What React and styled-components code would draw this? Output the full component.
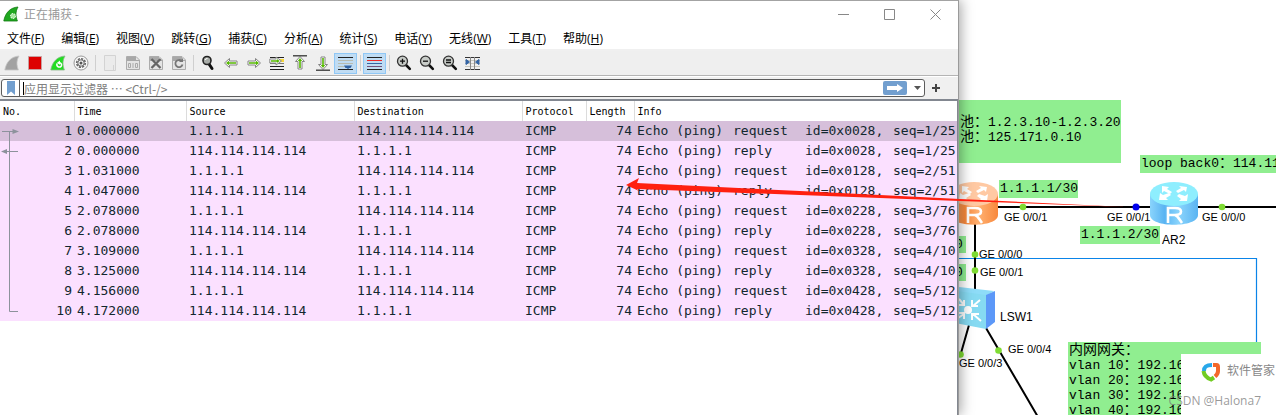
import styled, { createGlobalStyle } from 'styled-components'

const GlobalStyle=createGlobalStyle`
    *{
        box-sizing:border-box;
    }
    body{
        margin:0px;
        background:#ffffff;
        overflow:hidden;
        font-family:"Open Sans","Noto Sans CJK SC",sans-serif;
        font-size:12px;
        color:#000000;
    }
    button{
        border:none;
        background:none;
        padding:0px;
        font:inherit;
    }
`;

const Desktop=styled.div`
    display:grid;
    grid-template-columns:minmax(0,1fr) 317px;
    min-height:100vh;
`;

const CaptureWindow=styled.main`
    position:relative;
    z-index:1;
    display:flex;
    flex-direction:column;
    background:#ffffff;
    border-top:1px solid #a3a3a3;
    border-right:1px solid #9a9a9a;
    box-shadow:2px 0px 12px rgba(0,0,0,0.35);
`;

const TitleBar=styled.header`
    display:flex;
    align-items:center;
    height:26px;
    padding-left:3px;
    color:#999999;
    h1{
        flex:1;
        margin:0px 0px 0px 5px;
        font-size:12px;
        font-weight:400;
    }
`;

const WindowButton=styled.button`
    width:46px;
    height:26px;
    display:flex;
    align-items:center;
    justify-content:center;
`;

const MenuBar=styled.nav`
    display:flex;
    align-items:center;
    gap:17px;
    height:24px;
    padding:2px 0px 0px 7px;
    border-bottom:2px solid #f0f0f0;
    button{
        white-space:nowrap;
        line-height:20px;
    }
`;

const ToolBar=styled.div`
    display:flex;
    align-items:center;
    height:25px;
    background:#efefef;
    border-bottom:1px solid #b4b4b4;
`;

const ToolButton=styled.button`
    width:23px;
    height:21px;
    display:flex;
    align-items:center;
    justify-content:center;
    flex-shrink:0;
    background:${props=>props.$on ? '#c0dcf3' : 'none'};
    border:${props=>props.$on ? '1px solid #90c8f6' : 'none'};
    opacity:${props=>props.$dim ? 0.55 : 1};
`;

const Separator=styled.span`
    width:6px;
    height:16px;
    flex-shrink:0;
    background:linear-gradient(#cfcfcf,#cfcfcf) center/1px 100% no-repeat;
`;

const FilterBar=styled.form`
    display:flex;
    align-items:center;
    height:23px;
    padding-left:1px;
    padding-right:18px;
    background:#f0f0f0;
    border-top:1px solid #ffffff;
`;

const FilterBox=styled.div`
    flex:1;
    display:flex;
    align-items:center;
    height:18px;
    padding-right:3px;
    background:#ffffff;
    border:1px solid #5c5c5c;
    border-radius:3px;
    input{
        flex:1;
        min-width:0;
        height:16px;
        padding:0px;
        border:none;
        outline:none;
        background:none;
        font-family:"Noto Sans CJK SC",sans-serif;
        font-size:12px;
    }
    input::placeholder{
        color:#808080;
    }
`;

const Bookmark=styled.button`
    width:18px;
    height:16px;
    display:flex;
    align-items:center;
    justify-content:center;
    border-right:1px solid #5c5c5c;
    margin-right:3px;
`;

const Caret=styled.span`
    width:1px;
    height:13px;
    background:#000000;
`;

const ApplyButton=styled.button`
    width:24px;
    height:14px;
    display:flex;
    align-items:center;
    justify-content:center;
    background:#729fcf;
    border-radius:2px;
`;

const DropButton=styled.button`
    width:14px;
    height:16px;
    display:flex;
    align-items:center;
    justify-content:flex-end;
`;

const AddButton=styled.button`
    width:15px;
    height:18px;
    display:flex;
    align-items:center;
    justify-content:flex-end;
`;

const ListFrame=styled.div`
    flex:1;
    overflow:hidden;
    border-top:2px solid #828790;
    border-right:1px solid #828790;
`;

const PacketTable=styled.table`
    width:100%;
    table-layout:fixed;
    border-collapse:collapse;
    th,td{
        height:20px;
        padding:0px 2px 0px 3px;
        overflow:hidden;
        white-space:nowrap;
        text-align:left;
    }
    th{
        font-family:"DejaVu Sans Mono",monospace;
        font-size:10px;
        font-weight:400;
        border-right:1px solid #dcdcdc;
    }
    th:last-child{
        border-right:none;
    }
`;

const PacketRow=styled.tr`
    background:${props=>props.$selected ? '#d6bfda' : '#fbe0ff'};
    color:#12272e;
    font-family:"DejaVu Sans Mono",monospace;
    font-size:13px;
    line-height:20px;
    td:first-child{
        padding-left:0px;
    }
    td:nth-child(6){
        text-align:right;
    }
`;

const Number=styled.div`
    display:flex;
    justify-content:space-between;
    height:20px;
`;

const Info=styled.div`
    display:grid;
    grid-template-columns:96px 72px 88px 1fr;
`;

const Topology=styled.section`
    position:relative;
    overflow:hidden;
    background:#ffffff;
`;

const Drawing=styled.svg`
    position:absolute;
    left:0px;
    top:0px;
`;

const Note=styled.div`
    position:absolute;
    left:${props=>props.$x}px;
    top:${props=>props.$y}px;
    width:${props=>props.$w}px;
    height:${props=>props.$h}px;
    padding:${props=>props.$pad || 0}px 0px 0px 1px;
    overflow:hidden;
    background:#90ee90;
    font-family:"Liberation Mono",monospace;
    font-size:13px;
    line-height:17px;
    white-space:nowrap;
    p{
        margin:0px;
        line-height:15px;
    }
`;

const Han=styled.span`
    font-family:"Noto Sans CJK SC",sans-serif;
    font-size:14px;
    line-height:0;
`;

const Label=styled.span`
    position:absolute;
    left:${props=>props.$x}px;
    top:${props=>props.$y}px;
    font-family:"Liberation Sans",sans-serif;
    font-size:${props=>props.$big ? 12 : 11}px;
    line-height:14px;
    white-space:nowrap;
`;

const Popup=styled.aside`
    position:absolute;
    right:0px;
    top:354px;
    width:95px;
    height:61px;
    display:flex;
    gap:6px;
    padding:8px 0px 0px 20px;
    background:#ffffff;
    color:#888888;
    line-height:18px;
    white-space:nowrap;
`;

const Watermark=styled.span`
    position:absolute;
    right:15px;
    top:393px;
    font-family:"Open Sans",sans-serif;
    font-size:12px;
    line-height:16px;
    color:rgba(120,120,120,0.75);
`;

const RedArrow=styled.svg`
    position:absolute;
    z-index:2;
    right:140px;
    top:170px;
    pointer-events:none;
`;

const menus=[
    ['文件','F'],['编辑','E'],['视图','V'],['跳转','G'],['捕获','C'],['分析','A'],
    ['统计','S'],['电话','Y'],['无线','W'],['工具','T'],['帮助','H'],
]

const A='1.1.1.1'
const B='114.114.114.114'
const packets=[
    ['0.000000','request','0x0028','1/25'],
    ['0.000000','reply','0x0028','1/25'],
    ['1.031000','request','0x0128','2/51'],
    ['1.047000','reply','0x0128','2/51'],
    ['2.078000','request','0x0228','3/76'],
    ['2.078000','reply','0x0228','3/76'],
    ['3.109000','request','0x0328','4/10'],
    ['3.125000','reply','0x0328','4/10'],
    ['4.156000','request','0x0428','5/12'],
    ['4.172000','reply','0x0428','5/12'],
]

const Arrow=({turn=0,bar})=>(
    <svg width='16' height='16' viewBox='0 0 16 16'>
        <path transform={`rotate(${turn} 8 8)`} d='M1.5 8L6.5 3.5V6H14V10H6.5V12.5Z' fill='#ffffff' stroke='#858585' strokeWidth='1'/>
        <path transform={`rotate(${turn} 8 8)`} d='M3 8L6 5.8V7.2H13V8.8H6V10.2Z' fill='#55b800'/>
        {bar==='top' && <path d='M1 0.8H15' stroke='#333333' strokeWidth='1.3'/>}
        {bar==='bottom' && <path d='M1 15.2H15' stroke='#333333' strokeWidth='1.3'/>}
    </svg>
)

const Lens=({sign})=>(
    <svg width='16' height='16' viewBox='0 0 16 16'>
        <path d='M9.5 9.5L13.8 13.8' stroke='#111111' strokeWidth='2.6' strokeLinecap='round'/>
        <circle cx='6.5' cy='6.2' r='5' fill='#c8ccc8' stroke='#333333' strokeWidth='1.3'/>
        <path d={sign} stroke='#111111' strokeWidth='1.3'/>
    </svg>
)

const Page=({children})=>(
    <svg width='16' height='16' viewBox='0 0 16 16'>
        <path d='M1.5 1.5H11L14.5 5V14.5H1.5Z' fill='#e4e4e4' stroke='#acacac'/>
        <path d='M2 2H11V5H14V6H2Z' fill='#a8a8a8'/>
        {children}
    </svg>
)

const Fin=({fill,edge,children,size=16})=>(
    <svg width={size} height={size} viewBox='0 0 16 16'>
        <path d='M0.8 15C2.2 7 7 1.6 15 1C12.4 5.5 12.5 10 14.4 15Z' fill={fill} stroke={edge} strokeWidth='0.8'/>
        {children}
    </svg>
)

const tools=[
    {name:'开始捕获',icon:<Fin fill='#a2a2a2' edge='#c8c8c8'/>},
    {name:'停止捕获',icon:<svg width='14' height='14'><path d='M0.5 0.5H13.5V13.5H0.5Z' fill='#dd0000' stroke='#c8a0a0'/></svg>},
    {name:'重新开始捕获',icon:<Fin fill='#22dd22' edge='#8ab88a'>
        <path d='M7 8.5C6 12 10.5 13.5 11.5 10.5C12 8.5 10 7.5 9 8' fill='none' stroke='#ffffff' strokeWidth='1.5'/>
        <path d='M10 5.5V9.8L6.8 8Z' fill='#ffffff'/>
    </Fin>},
    {name:'捕获选项',icon:<svg width='16' height='16' viewBox='0 0 16 16'>
        <circle cx='8' cy='8' r='7' fill='#f8f8f8' stroke='#9a9a9a'/>
        <circle cx='8' cy='8' r='4.3' fill='none' stroke='#666666' strokeWidth='1.6' strokeDasharray='2.2 1.1'/>
        <circle cx='8' cy='8' r='3.2' fill='none' stroke='#666666'/>
        <circle cx='8' cy='8' r='1.5' fill='#555555'/>
    </svg>},
    null,
    {name:'打开',dim:true,icon:<svg width='14' height='16'><path d='M1.5 0.5H12.5V15.5H1.5ZM10.5 10V15' fill='#e9e9e9' stroke='#bdbdbd'/></svg>},
    {name:'保存',icon:<Page><path d='M3.5 8.5H5.5V12.5H3.5ZM8 8V13M10.5 8.5H12.5V12.5H10.5Z' fill='none' stroke='#aaaaaa'/></Page>},
    {name:'关闭文件',icon:<Page><path d='M3.5 4L12.5 13M12.5 4L3.5 13' stroke='#666666' strokeWidth='2.3'/></Page>},
    {name:'重新加载',icon:<Page><path d='M10.5 6A3.6 3.6 0 1 0 11.5 9.5' fill='none' stroke='#777777' strokeWidth='1.8'/><path d='M8 7H12V3Z' fill='#777777'/></Page>},
    null,
    {name:'查找',icon:<svg width='16' height='16' viewBox='0 0 16 16'>
        <path d='M9 9L12 13.5' stroke='#111111' strokeWidth='3' strokeLinecap='round'/>
        <circle cx='7' cy='5.5' r='4' fill='#a8aca8' stroke='#222222' strokeWidth='1.6'/>
        <path d='M5 5Q5.5 3.5 7.5 3.5' fill='none' stroke='#ffffff'/>
    </svg>},
    {name:'后退',icon:<Arrow/>},
    {name:'前进',icon:<Arrow turn={180}/>},
    {name:'转到分组',icon:<svg width='16' height='16' viewBox='0 0 16 16'>
        <path d='M1 2.5H15M1 11.5H15M1 14.5H15' stroke='#222222' strokeWidth='1.2'/>
        <path d='M10 5.5H15' stroke='#f8d838' strokeWidth='3'/>
        <path d='M1 8.5H15' stroke='#777777'/>
        <path d='M0.8 4H7V2L12.5 6L7 10V8H0.8Z' fill='#ffffff' stroke='#8a8a8a'/>
        <path d='M2 5.3H7.8V4L10.8 6L7.8 8V6.7H2Z' fill='#55b800'/>
    </svg>},
    {name:'首个分组',icon:<Arrow turn={90} bar='top'/>},
    {name:'最新分组',icon:<Arrow turn={270} bar='bottom'/>},
    {name:'自动滚动',on:true,icon:<svg width='15' height='15'>
        <path d='M0 1.5H15M0 13.5H15' stroke='#222222'/>
        <path d='M0 4.5H15M0 7.5H15M0 10.5H8' stroke='#b8bcb0'/>
        <path d='M6 9.5H14L12.5 12H11.5L10 13L8.5 12H7.5Z' fill='#3465a4'/>
    </svg>},
    null,
    {name:'着色',on:true,icon:<svg width='15' height='15'>
        <path d='M0 1.5H15M0 13.5H15' stroke='#222222'/>
        <path d='M0 4.5H15' stroke='#ef2929'/>
        <path d='M0 7.5H15' stroke='#3465a4'/>
        <path d='M0 10.5H15' stroke='#75507b'/>
    </svg>},
    null,
    {name:'放大',icon:<Lens sign='M4 6.2H9M6.5 3.7V8.7'/>},
    {name:'缩小',icon:<Lens sign='M4 6.2H9'/>},
    {name:'正常大小',icon:<Lens sign='M4 5H9M4 7.5H9'/>},
    {name:'调整列宽',icon:<svg width='15' height='15'>
        <path d='M0 1.5H15M0 13.5H15' stroke='#333333'/>
        <path d='M0 4.5H15M0 7.5H15M0 10.5H15' stroke='#c8c8c0'/>
        <path d='M5.5 1V14M9.5 1V14' stroke='#888888'/>
        <path d='M1 3.5L4.5 6L1 8.5ZM14 3.5L10.5 6L14 8.5Z' fill='#3465a4' stroke='#3465a4'/>
    </svg>},
]

/* line that joins the packets of one conversation */
function Related({index}){
    return(
        <svg width='20' height='20' fill='none' stroke='#8d929c'>
            {index===0 && <><path d='M2 10.5H13M9.5 10.5V20'/><path d='M12.5 8L19 10.5L12.5 13Z' fill='#8d929c' stroke='none'/></>}
            {index===1 && <><path d='M7 10.5H18M9.5 0V20'/><path d='M7 8L1 10.5L7 13Z' fill='#8d929c' stroke='none'/></>}
            {index>1 && index<9 && <path d='M9.5 0V20'/>}
            {index===9 && <path d='M9.5 0V10.5H18'/>}
        </svg>
    )
}

function Router({x,y,id,top,light,dark}){
    return(
        <g transform={`translate(${x} ${y})`}>
            <defs>
                <linearGradient id={id}>
                    <stop offset='0' stopColor={light}/>
                    <stop offset='0.3' stopColor={dark}/>
                    <stop offset='0.6' stopColor={light}/>
                    <stop offset='1' stopColor={dark}/>
                </linearGradient>
            </defs>
            <path d='M0 12V33C0 46 48 46 48 33V12Z' fill={`url(#${id})`}/>
            <ellipse cx='24' cy='12' rx='24' ry='12' fill={top}/>
            <g fill='#ffffff'>
                <path d='M12 4L19 5L17 7L22 10L20 12L14 9L12 11Z'/>
                <path d='M37 5L29 4L31 6L26 9L28 11L34 8L36 10Z'/>
                <path d='M9 18L10 11L13 13L19 11L21 13L16 16L18 18Z'/>
                <path d='M37 19L38 12L35 14L29 12L27 14L31 17L29 19Z'/>
            </g>
            <path d='M18 41V26H25C33 26 33 33 25 33H18M25 33C28 34 29 37 32 41' fill='none' stroke='#ffffff' strokeWidth='2.6'/>
        </g>
    )
}

function Network(){
    return(
        <Topology aria-label='topology'>
            <Note $x={0} $y={100} $w={162} $h={63} $pad={15}>
                <p><Han>池：</Han>1.2.3.10-1.2.3.20</p>
                <p><Han>池：</Han>125.171.0.10</p>
            </Note>
            <Note $x={181} $y={155} $w={136} $h={18}>loop back0<Han>：</Han>114.11</Note>
            <Note $x={40} $y={180} $w={79} $h={18}>1.1.1.1/30</Note>
            <Note $x={121} $y={226} $w={80} $h={18}>1.1.1.2/30</Note>
            <Note $x={-5} $y={236} $w={12} $h={17}>0</Note>
            <Note $x={-5} $y={264} $w={12} $h={17}>0</Note>
            <Drawing width='317' height='415'>
                <path d='M0 258.5H297.5V343' fill='none' stroke='#0a84e8' strokeWidth='1.2'/>
                <g stroke='#000000' strokeWidth='2'>
                    <path d='M38 207H192M238 207H317M16 222V290M10 325L2 353M27 328L79 417'/>
                </g>
                <Router x={-9} y={182} id='orange' top='#ffc9a3' light='#ffb070' dark='#f8883c'/>
                <Router x={191} y={182} id='blue' top='#8eeefe' light='#8ad4fc' dark='#5ab4f2'/>
                <path d='M-9 286L35 291L27 296H-9Z' fill='#8edcf8'/>
                <path d='M-9 290L27 295V329L-9 322Z' fill='#86daf2'/>
                <path d='M27 295L36 291V322L27 329Z' fill='#5c98f8'/>
                <ellipse cx='9' cy='310' rx='4' ry='4' fill='#ffffff'/>
                <path d='M21 300L14 306M13 300V306H19M22 321L14 314M13 320V314H20M0 299L5 305M0 305H5V300M-1 318L5 314M0 313H5V319' stroke='#ffffff' strokeWidth='2' fill='none'/>
                <g fill='#7fdc33'>
                    <circle cx='64' cy='207' r='3.3'/>
                    <circle cx='263' cy='207' r='3.3'/>
                    <circle cx='16' cy='254.5' r='3.3'/>
                    <circle cx='16' cy='270.5' r='3.3'/>
                    <circle cx='39.5' cy='350.5' r='3.3'/>
                    <circle cx='1.5' cy='354.5' r='3.3'/>
                </g>
                <circle cx='177' cy='207' r='3.5' fill='#0000ee'/>
            </Drawing>
            <Label $x={45} $y={210}>GE 0/0/1</Label>
            <Label $x={148} $y={210}>GE 0/0/1</Label>
            <Label $x={243} $y={210}>GE 0/0/0</Label>
            <Label $x={203} $y={233} $big>AR2</Label>
            <Label $x={20} $y={247}>GE 0/0/0</Label>
            <Label $x={21} $y={265}>GE 0/0/1</Label>
            <Label $x={41} $y={310} $big>LSW1</Label>
            <Label $x={49} $y={342}>GE 0/0/4</Label>
            <Label $x={0} $y={356}>GE 0/0/3</Label>
            <Note $x={109} $y={342} $w={193} $h={73} $pad={1}>
                <p><Han>内网网关：</Han></p>
                <p>vlan 10<Han>：</Han>192.16</p>
                <p>vlan 20<Han>：</Han>192.16</p>
                <p>vlan 30<Han>：</Han>192.16</p>
                <p>vlan 40<Han>：</Han>192.16</p>
            </Note>
            <Popup>
                <svg width='20' height='20' viewBox='0 0 20 20' fill='none' strokeWidth='4'>
                    <path d='M3 9C3 5 5 3 11 3' stroke='#28a8ea'/>
                    <path d='M12 3H15.5Q17 3 17 5V9Q17 12 14 14.5' stroke='#f4682a'/>
                    <path d='M2.5 9C3 13 6 16 10 17.5L13 15.5' stroke='#72cc22'/>
                </svg>
                软件管家
            </Popup>
            <Watermark>CSDN @Halona7</Watermark>
        </Topology>
    )
}

function App(){
    return(
        <Desktop>
            <GlobalStyle/>
            <CaptureWindow>
                <TitleBar>
                    <Fin fill='#20a820' edge='#107810'>
                        <circle cx='10' cy='10' r='2.5' fill='#a8e8a0' stroke='#ffffff' strokeDasharray='1.5 1'/>
                    </Fin>
                    <h1>正在捕获 -</h1>
                    <WindowButton aria-label='最小化'><svg width='11' height='11'><path d='M0 5.5H11' stroke='#888888'/></svg></WindowButton>
                    <WindowButton aria-label='最大化'><svg width='11' height='11'><path d='M0.5 0.5H10.5V10.5H0.5Z' fill='none' stroke='#888888'/></svg></WindowButton>
                    <WindowButton aria-label='关闭'><svg width='11' height='11'><path d='M0.5 0.5L10.5 10.5M10.5 0.5L0.5 10.5' stroke='#888888'/></svg></WindowButton>
                </TitleBar>
                <MenuBar>
                    {menus.map(([text,key])=>(
                        <button key={key}>{text}(<u>{key}</u>)</button>
                    ))}
                </MenuBar>
                <ToolBar>
                    {tools.map((tool,i)=>tool
                        ? <ToolButton key={i} aria-label={tool.name} $on={tool.on} $dim={tool.dim}>{tool.icon}</ToolButton>
                        : <Separator key={i}/>
                    )}
                </ToolBar>
                <FilterBar>
                    <FilterBox>
                        <Bookmark type='button' aria-label='书签'>
                            <svg width='8' height='14'><path d='M0 0H8V14L4 10.5L0 14Z' fill='#729fcf'/></svg>
                        </Bookmark>
                        <Caret/>
                        <input aria-label='显示过滤器' placeholder='应用显示过滤器 ⋯ <Ctrl-/>'/>
                        <ApplyButton type='button' aria-label='应用'>
                            <svg width='16' height='8'><path d='M0 2H10V0L16 4L10 8V6H0Z' fill='#ffffff'/></svg>
                        </ApplyButton>
                        <DropButton type='button' aria-label='历史'>
                            <svg width='7' height='4'><path d='M0 0H7L3.5 4Z' fill='#555555'/></svg>
                        </DropButton>
                    </FilterBox>
                    <AddButton type='button' aria-label='添加'>
                        <svg width='8' height='8'><path d='M0 4H8M4 0V8' stroke='#444444' strokeWidth='2'/></svg>
                    </AddButton>
                </FilterBar>
                <ListFrame>
                    <PacketTable>
                        <colgroup>
                            <col width='74'/>
                            <col width='112'/>
                            <col width='168'/>
                            <col width='168'/>
                            <col width='64'/>
                            <col width='48'/>
                            <col/>
                        </colgroup>
                        <thead>
                            <tr>
                                <th>No.</th>
                                <th>Time</th>
                                <th>Source</th>
                                <th>Destination</th>
                                <th>Protocol</th>
                                <th>Length</th>
                                <th>Info</th>
                            </tr>
                        </thead>
                        <tbody>
                            {packets.map(([time,kind,id,seq],i)=>(
                                <PacketRow key={i} $selected={i===0}>
                                    <td><Number><Related index={i}/>{i+1}</Number></td>
                                    <td>{time}</td>
                                    <td>{kind==='request' ? A : B}</td>
                                    <td>{kind==='request' ? B : A}</td>
                                    <td>ICMP</td>
                                    <td>74</td>
                                    <td>
                                        <Info>
                                            <span>Echo (ping)</span>
                                            <span>{kind}</span>
                                            <span>id={id},</span>
                                            <span>seq={seq}</span>
                                        </Info>
                                    </td>
                                </PacketRow>
                            ))}
                        </tbody>
                    </PacketTable>
                </ListFrame>
            </CaptureWindow>
            <Network/>
            <RedArrow width='510' height='44'>
                <path d='M0 15L13 8L11 13L174 21L334 29L500 37L334 31L174 25L11 19L13 21Z' fill='#ff2010'/>
            </RedArrow>
        </Desktop>
    )
}

export default App;
